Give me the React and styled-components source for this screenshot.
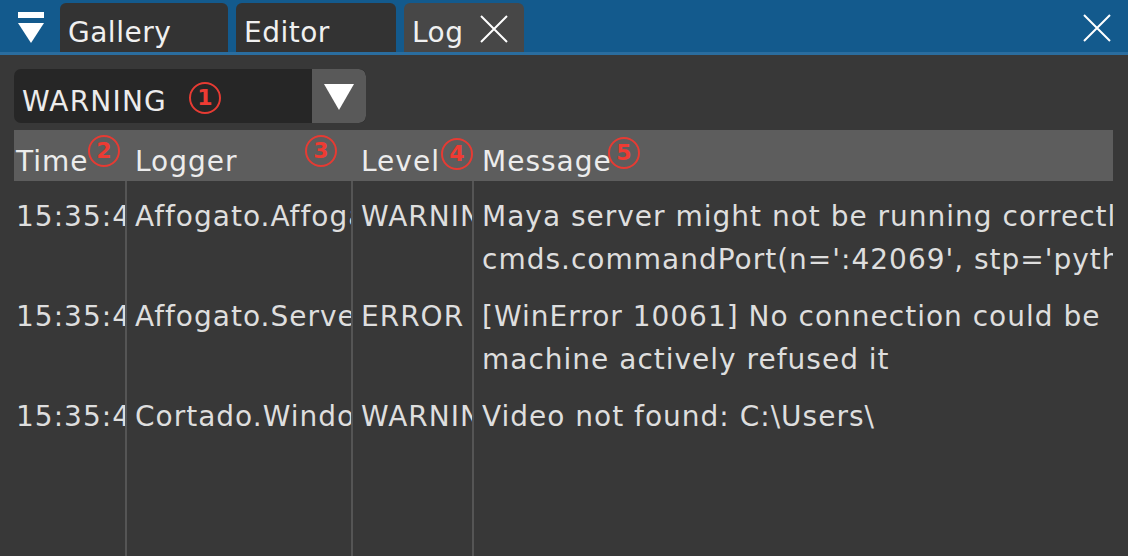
import styled, { createGlobalStyle } from "styled-components";

const GlobalStyle = createGlobalStyle`
    html, body, #root {
        margin: 0;
        height: 100%;
    }
    body {
        background: #383838;
        font-family: "DejaVu Sans", "Liberation Sans", sans-serif;
        overflow: hidden;
    }
`

const rows = [
    {
        time: "15:35:42",
        logger: "Affogato.AffogatoServer",
        level: "WARNING",
        lines: ["Maya server might not be running correctly", "cmds.commandPort(n=':42069', stp='python')"],
    },
    {
        time: "15:35:42",
        logger: "Affogato.Server",
        level: "ERROR",
        lines: ["[WinError 10061] No connection could be", "machine actively refused it"],
    },
    {
        time: "15:35:43",
        logger: "Cortado.Window",
        level: "WARNING",
        lines: ["Video not found: C:\\Users\\"],
    },
]

const markers = [
    { n: 2, left: 74, top: 5 },
    { n: 3, left: 291, top: 5 },
    { n: 4, left: 427, top: 8 },
    { n: 5, left: 594, top: 7 },
]

export default function App() {
    return (
        <>
            <GlobalStyle />
            <Page>
                <TabBar>
                    <MenuButton>
                        <svg width="28" height="32" viewBox="0 0 28 32">
                            <rect x="1" y="0" width="26" height="6" fill="#fff" />
                            <polygon points="1,11 27,11 14,31" fill="#fff" />
                        </svg>
                    </MenuButton>
                    <Tab $width={168}>Gallery</Tab>
                    <Tab $width={160}>Editor</Tab>
                    <Tab $width={120} $active>
                        Log
                        <CloseIcon size={28} />
                    </Tab>
                    <Spacer />
                    <WindowClose>
                        <CloseIcon size={28} />
                    </WindowClose>
                </TabBar>

                <Content>
                    <Combo>
                        <ComboValue>
                            WARNING
                            <InlineMarker>1</InlineMarker>
                        </ComboValue>
                        <ComboButton>
                            <svg width="30" height="26" viewBox="0 0 30 26">
                                <polygon points="0,0 30,0 15,26" fill="#fff" />
                            </svg>
                        </ComboButton>
                    </Combo>

                    <Table>
                        <HeaderRow>
                            <HeadCell $first>Time</HeadCell>
                            <HeadCell>Logger</HeadCell>
                            <HeadCell>Level</HeadCell>
                            <HeadCell>Message</HeadCell>
                            {markers.map((m) => (
                                <Marker key={m.n} $left={m.left} $top={m.top}>{m.n}</Marker>
                            ))}
                        </HeaderRow>
                        {rows.map((r, i) => (
                            <Row key={i}>
                                <Cell $first>{r.time}</Cell>
                                <Cell>{r.logger}</Cell>
                                <Cell>{r.level}</Cell>
                                <Cell $last>
                                    {r.lines.map((l, j) => <Line key={j}>{l}</Line>)}
                                </Cell>
                            </Row>
                        ))}
                        <Filler>
                            <Cell $first />
                            <Cell />
                            <Cell />
                            <Cell $last />
                        </Filler>
                    </Table>
                </Content>
            </Page>
        </>
    )
}

const CloseIcon = ({ size }) => (
    <svg width={size} height={size} viewBox="0 0 28 28">
        <path d="M1 1 L27 27 M27 1 L1 27" stroke="#fff" strokeWidth="2" fill="none" />
    </svg>
)

const Page = styled.div`
    height: 100vh;
    display: flex;
    flex-direction: column;
`

const TabBar = styled.div`
    height: 52px;
    background: #135a8d;
    border-bottom: 3px solid #2a6d9f;
    display: flex;
    align-items: flex-end;
    flex-shrink: 0;
`

const MenuButton = styled.div`
    width: 60px;
    height: 52px;
    display: flex;
    align-items: flex-start;
    padding: 12px 0 0 17px;
    box-sizing: border-box;
`

const Tab = styled.div`
    width: ${(p) => p.$width}px;
    height: 49px;
    margin-right: 8px;
    box-sizing: border-box;
    padding: 14px 0 0 8px;
    background: ${(p) => (p.$active ? "#474747" : "#333333")};
    border-radius: 6px 6px 0 0;
    color: #f0f0f0;
    font-size: 28px;
    line-height: 32px;
    letter-spacing: 0.5px;
    display: flex;
    align-items: flex-start;
    gap: 16px;

    svg {
        margin-top: -2px;
    }
`

const Spacer = styled.div`
    flex: 1;
`

const WindowClose = styled.div`
    align-self: stretch;
    padding: 14px 17px 0 0;
`

const Content = styled.div`
    flex: 1;
    display: flex;
    flex-direction: column;
    padding: 14px 15px 0 14px;
    min-height: 0;
`

const Combo = styled.div`
    width: 352px;
    height: 54px;
    display: flex;
    border-radius: 7px;
    overflow: hidden;
    background: #262626;
    flex-shrink: 0;
`

const ComboValue = styled.div`
    flex: 1;
    display: flex;
    align-items: center;
    padding: 10px 0 0 8px;
    color: #ececec;
    font-size: 28px;
    letter-spacing: 1.2px;
`

const ComboButton = styled.div`
    width: 54px;
    background: #595959;
    display: flex;
    align-items: center;
    justify-content: center;
    padding-top: 2px;
    border-radius: 0 7px 7px 0;
`

const markerStyle = `
    width: 32px;
    height: 32px;
    box-sizing: border-box;
    border: 2px solid #e63b33;
    border-radius: 50%;
    color: #ee3b33;
    font-family: "DejaVu Sans", sans-serif;
    font-weight: bold;
    font-size: 22px;
    line-height: 28px;
    letter-spacing: 0;
    text-align: center;
`

const InlineMarker = styled.span`
    ${markerStyle}
    display: inline-block;
    margin: -6px 0 0 22px;
`

const Marker = styled.span`
    ${markerStyle}
    position: absolute;
    left: ${(p) => p.$left}px;
    top: ${(p) => p.$top}px;
`

const Table = styled.div`
    flex: 1;
    display: flex;
    flex-direction: column;
    margin-top: 7px;
    min-height: 0;
`

const grid = `
    display: grid;
    grid-template-columns: 113px 226px 121px 1fr;
`

const HeaderRow = styled.div`
    ${grid}
    position: relative;
    height: 51px;
    background: #5d5d5d;
    flex-shrink: 0;
`

const HeadCell = styled.div`
    padding: 12px 0 0 ${(p) => (p.$first ? 2 : 8)}px;
    color: #ececec;
    font-size: 28px;
    line-height: 39px;
    letter-spacing: 1px;
    white-space: nowrap;
    overflow: hidden;
`

const Row = styled.div`
    ${grid}
    flex-shrink: 0;
`

const Filler = styled.div`
    ${grid}
    flex: 1;
`

const Cell = styled.div`
    padding: 14px 0 0 ${(p) => (p.$first ? 2 : 8)}px;
    border-right: ${(p) => (p.$last ? "none" : "2px solid #555555")};
    color: #dedede;
    font-size: 28px;
    line-height: 43px;
    letter-spacing: 1px;
    white-space: nowrap;
    overflow: hidden;
    min-width: 0;
`

const Line = styled.div`
    white-space: nowrap;
    overflow: hidden;
`
